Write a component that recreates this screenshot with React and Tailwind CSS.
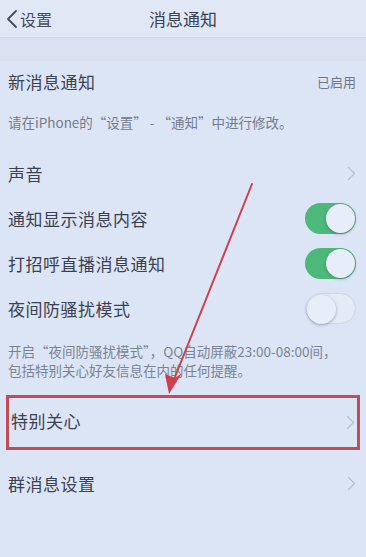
import React from "react";

const Chevron = () => (
  <svg width="9" height="15" viewBox="0 0 9 15" fill="none">
    <path d="M1.5 1.5 L7.5 7.5 L1.5 13.5" stroke="#b7bfcc" strokeWidth="1.3" strokeLinecap="round" strokeLinejoin="round" />
  </svg>
);

const Toggle = ({ on }) => (
  <div
    className={
      "relative w-[51px] h-[31px] rounded-full " +
      (on ? "bg-[#4cb87a]" : "bg-[#e4eaf6] border border-[#cfd6e4]")
    }
  >
    <div
      className={
        "absolute top-[1px] w-[29px] h-[29px] rounded-full bg-[#e8eef9] shadow-[0_1px_3px_rgba(60,70,90,0.45)] " +
        (on ? "right-[1px]" : "left-[1px] top-[0px]")
      }
    />
  </div>
);

const Row = ({ label, right, h = "h-[45px]" }) => (
  <div className={"flex items-center justify-between pl-[8px] pr-[10px] " + h}>
    <span className="text-[17px] text-[#3b4150] tracking-[0.5px]">{label}</span>
    {right}
  </div>
);

export default function App() {
  return (
    <div
      className="relative w-[366px] h-[557px] overflow-hidden bg-[#dce5f5] text-[#3b4150]"
      style={{ fontFamily: '"Noto Sans CJK SC", "Noto Sans", sans-serif' }}
    >
      {/* Nav */}
      <div className="relative flex items-center h-[38px] bg-[#e1e8f5] border-b border-[#d2d9e6]">
        <div className="flex items-center pl-[6px] gap-[2px]">
          <svg width="12" height="20" viewBox="0 0 12 20" fill="none">
            <path d="M10 2 L2 10 L10 18" stroke="#444b59" strokeWidth="1.8" strokeLinecap="round" strokeLinejoin="round" />
          </svg>
          <span className="text-[16px] text-[#444b59]">设置</span>
        </div>
        <div className="absolute left-0 right-0 text-center text-[17px] text-[#3b4150] pointer-events-none">
          消息通知
        </div>
      </div>

      <div className="h-[23px] bg-[#dae2f1]" />

      <Row
        label="新消息通知"
        h="h-[42px]"
        right={<span className="text-[13px] text-[#707888]">已启用</span>}
      />
      <div className="h-[44px] pl-[8px] pt-[9px] text-[13.5px] text-[#747c8c]">
        请在iPhone的“设置” - “通知”中进行修改。
      </div>

      <div className="h-[4px]" />
      <Row label="声音" right={<Chevron />} />
      <Row label="通知显示消息内容" right={<Toggle on />} />
      <Row label="打招呼直播消息通知" right={<Toggle on />} />
      <Row label="夜间防骚扰模式" right={<Toggle on={false} />} />

      <div className="h-[64px] pl-[8px] pt-[11px] text-[13.5px] leading-[19px] text-[#7b8393] whitespace-nowrap">
        <div>开启“夜间防骚扰模式”，QQ自动屏蔽23:00-08:00间，</div>
        <div>包括特别关心好友信息在内的任何提醒。</div>
      </div>

      <div className="mx-[6px] h-[55px] border-[3px] border-[#c24d5a] flex items-center justify-between pl-[2px] pr-[2px]">
        <span className="text-[17px] text-[#3b4150] tracking-[0.5px] -mt-[3px]">特别关心</span>
        <Chevron />
      </div>

      <div className="h-[11px]" />
      <Row label="群消息设置" right={<Chevron />} />

      {/* Annotation arrow */}
      <svg className="absolute left-0 top-0 pointer-events-none" width="366" height="557" viewBox="0 0 366 557">
        <line x1="252" y1="184" x2="173" y2="382" stroke="#d0404c" strokeWidth="2" strokeLinecap="round" />
        <path d="M169 394 L165 374 L175 378 L182 373 Z" fill="#d0404c" />
      </svg>
    </div>
  );
}
